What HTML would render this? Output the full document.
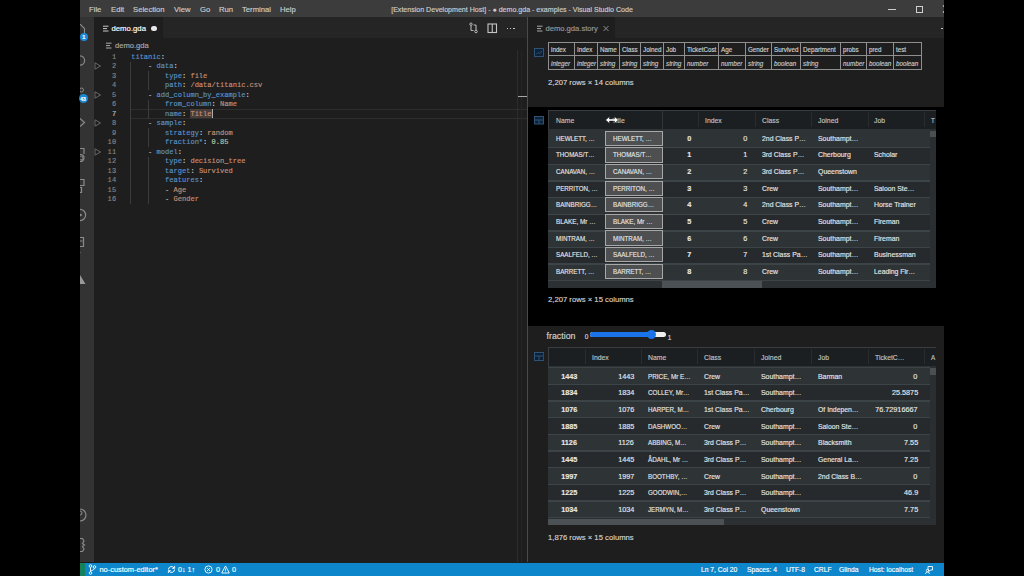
<!DOCTYPE html><html><head><meta charset="utf-8"><style>
html,body{margin:0;padding:0;width:1024px;height:576px;overflow:hidden;background:#000;}
body{position:relative;font-family:"Liberation Sans",sans-serif;}
.t{position:absolute;white-space:nowrap;line-height:0;-webkit-text-stroke:0.15px currentColor;}
.b{position:absolute;box-sizing:border-box;}
svg{position:absolute;overflow:hidden;}
</style></head><body>
<div class="b" style="left:80px;top:0px;width:864px;height:576px;background:#1e1e1e;"></div>
<div class="b" style="left:80px;top:0px;width:864px;height:17.2px;background:#3c3c3c;"></div>
<div class="t" style="left:89px;top:9.6px;font-size:7.7px;color:#cccccc;font-weight:normal;font-style:normal;font-family:'Liberation Sans', sans-serif;">File</div>
<div class="t" style="left:111px;top:9.6px;font-size:7.7px;color:#cccccc;font-weight:normal;font-style:normal;font-family:'Liberation Sans', sans-serif;">Edit</div>
<div class="t" style="left:133px;top:9.6px;font-size:7.7px;color:#cccccc;font-weight:normal;font-style:normal;font-family:'Liberation Sans', sans-serif;">Selection</div>
<div class="t" style="left:174px;top:9.6px;font-size:7.7px;color:#cccccc;font-weight:normal;font-style:normal;font-family:'Liberation Sans', sans-serif;">View</div>
<div class="t" style="left:200px;top:9.6px;font-size:7.7px;color:#cccccc;font-weight:normal;font-style:normal;font-family:'Liberation Sans', sans-serif;">Go</div>
<div class="t" style="left:219px;top:9.6px;font-size:7.7px;color:#cccccc;font-weight:normal;font-style:normal;font-family:'Liberation Sans', sans-serif;">Run</div>
<div class="t" style="left:242px;top:9.6px;font-size:7.7px;color:#cccccc;font-weight:normal;font-style:normal;font-family:'Liberation Sans', sans-serif;">Terminal</div>
<div class="t" style="left:280px;top:9.6px;font-size:7.7px;color:#cccccc;font-weight:normal;font-style:normal;font-family:'Liberation Sans', sans-serif;">Help</div>
<div class="t" style="left:512px;top:9.6px;font-size:7.07px;color:#cccccc;font-weight:normal;font-style:normal;font-family:'Liberation Sans', sans-serif;transform:translateX(-50%) scaleX(1.0);">[Extension Development Host] - ● demo.gda - examples - Visual Studio Code</div>
<div class="b" style="left:888px;top:9px;width:8px;height:1px;background:#cccccc;"></div>
<div class="b" style="left:916px;top:6px;width:6.6px;height:6.5px;background:transparent;border:1.2px solid #d0d0d0;"></div>
<svg style="left:940px;top:4px" width="4" height="10" viewBox="0 0 4 10"><path d="M3 1.5L6 4.5M3 8.5L6 5.5" stroke="#ccc" stroke-width="1.1"/></svg>
<div class="b" style="left:80px;top:17.2px;width:13.5px;height:545.3px;background:#333333;"></div>
<svg style="left:80px;top:22px" width="8" height="12" viewBox="0 0 8 12"><path d="M-3 2.5h3.5l4 4v6" stroke="#8a8a8a" fill="none" stroke-width="1.1"/></svg>
<svg style="left:80px;top:54px" width="8" height="14" viewBox="0 0 8 14"><circle cx="0" cy="6.5" r="4.6" stroke="#8a8a8a" fill="none" stroke-width="1.2"/></svg>
<svg style="left:80px;top:86px" width="8" height="8" viewBox="0 0 8 8"><circle cx="1.5" cy="4" r="2" stroke="#8a8a8a" fill="none" stroke-width="1"/></svg>
<svg style="left:80px;top:117px" width="8" height="12" viewBox="0 0 8 12"><path d="M0 1.5L4.5 5.5L0 9.5" stroke="#8a8a8a" fill="none" stroke-width="1.2"/></svg>
<svg style="left:80px;top:147px" width="8" height="16" viewBox="0 0 8 16"><path d="M-2 1.5h6v5.5M-2 7.5h2.5a3 3 0 0 1 0 7H-2" stroke="#8a8a8a" fill="none" stroke-width="1.2"/><circle cx="1" cy="11" r="2" stroke="#8a8a8a" fill="none" stroke-width="1"/></svg>
<svg style="left:80px;top:178px" width="8" height="16" viewBox="0 0 8 16"><path d="M-2 1.5h6v6h-6M-2 9.5h3.5v5h-3.5" stroke="#8a8a8a" fill="none" stroke-width="1.2"/></svg>
<svg style="left:80px;top:207px" width="8" height="17" viewBox="0 0 8 17"><circle cx="0" cy="8" r="5.6" stroke="#8a8a8a" fill="none" stroke-width="1.2"/><circle cx="0.5" cy="8" r="1.3" fill="#8a8a8a"/></svg>
<svg style="left:80px;top:236px" width="8" height="19" viewBox="0 0 8 19"><path d="M-3 1.5h6.5v9h-6.5M0 5h2.5M-3 10.5v6h3.5" stroke="#8a8a8a" fill="none" stroke-width="1.2"/></svg>
<svg style="left:80px;top:274px" width="8" height="11" viewBox="0 0 8 11"><path d="M0 1L5.5 10H0Z" fill="#999"/></svg>
<svg style="left:80px;top:507px" width="8" height="17" viewBox="0 0 8 17"><circle cx="0" cy="8" r="6" stroke="#8a8a8a" fill="none" stroke-width="1.2"/><circle cx="0" cy="6" r="2" stroke="#8a8a8a" fill="none" stroke-width="1"/></svg>
<svg style="left:80px;top:537px" width="8" height="16" viewBox="0 0 8 16"><path d="M0 1.5h2.5l1.5 2.5-1.5 2.5 2 1.5-2 1.5 1.5 2.5-1.5 2.5H0" stroke="#8a8a8a" fill="none" stroke-width="1.2"/></svg>
<div class="b" style="left:79.5px;top:32.6px;width:8.4px;height:8.4px;border-radius:50%;background:#1a8ad8"></div>
<div class="t" style="left:83.7px;top:37.2px;font-size:5.5px;color:#fff;font-weight:bold;font-style:normal;font-family:'Liberation Sans', sans-serif;transform:translateX(-50%) scaleX(1.0);">1</div>
<div class="b" style="left:78.5px;top:94.4px;width:9px;height:9px;border-radius:50%;background:#1a8ad8"></div>
<div class="t" style="left:83px;top:99px;font-size:5px;color:#fff;font-weight:bold;font-style:normal;font-family:'Liberation Sans', sans-serif;transform:translateX(-50%) scaleX(1.0);">43</div>
<div class="b" style="left:93.5px;top:17.2px;width:433.5px;height:21.2px;background:#252526;"></div>
<div class="b" style="left:93.5px;top:17.2px;width:69.5px;height:21.2px;background:#1e1e1e;"></div>
<svg style="left:102.5px;top:24.5px" width="6" height="8" viewBox="0 0 6 8"><path d="M0 1.2h5.5M0 3.6h4M0 6h5.5" stroke="#c8c8c8" stroke-width="1"/></svg>
<div class="t" style="left:111.5px;top:28.7px;font-size:7.75px;color:#ffffff;font-weight:normal;font-style:normal;font-family:'Liberation Sans', sans-serif;">demo.gda</div>
<div class="b" style="left:151.4px;top:26px;width:5.2px;height:5.2px;border-radius:50%;background:#e8e8e8"></div>
<svg style="left:468px;top:22px" width="11" height="12" viewBox="0 0 11 12"><path d="M3 3.5v5M8 3v5" stroke="#c5c5c5" fill="none" stroke-width="1"/><circle cx="3" cy="2.2" r="1.2" stroke="#c5c5c5" fill="none" stroke-width="0.9"/><circle cx="8" cy="9.5" r="1.3" stroke="#c5c5c5" fill="none" stroke-width="0.9"/><path d="M3 8.5h2.5M8 3h-2.5" stroke="#c5c5c5" stroke-width="0.9"/></svg>
<svg style="left:487px;top:22.5px" width="11" height="11" viewBox="0 0 11 11"><rect x="1" y="1" width="8.5" height="8.5" stroke="#c5c5c5" fill="none" stroke-width="1.1"/><path d="M5.25 1v8.5" stroke="#c5c5c5" stroke-width="1.1"/></svg>
<div class="b" style="left:506.6px;top:27.6px;width:1.5px;height:1.5px;background:#c5c5c5;"></div>
<div class="b" style="left:509.90000000000003px;top:27.6px;width:1.5px;height:1.5px;background:#c5c5c5;"></div>
<div class="b" style="left:513.2px;top:27.6px;width:1.5px;height:1.5px;background:#c5c5c5;"></div>
<svg style="left:106px;top:41.6px" width="6" height="8" viewBox="0 0 6 8"><path d="M0 1.2h5.5M0 3.6h4M0 6h5.5" stroke="#aaaaaa" stroke-width="1"/></svg>
<div class="t" style="left:115px;top:45.6px;font-size:7.6px;color:#a9a9a9;font-weight:normal;font-style:normal;font-family:'Liberation Sans', sans-serif;">demo.gda</div>
<div class="b" style="left:130px;top:109.08px;width:396.5px;height:9.6px;background:transparent;border-top:1px solid #2e2e2e;border-bottom:1px solid #2e2e2e;"></div>
<div class="b" style="left:130.2px;top:61.74px;width:1px;height:142.20000000000002px;background:#3c3c3c;"></div>
<div class="b" style="left:147.9px;top:71.22px;width:1px;height:18.96px;background:#3c3c3c;"></div>
<div class="b" style="left:147.9px;top:99.66px;width:1px;height:18.96px;background:#3c3c3c;"></div>
<div class="b" style="left:147.9px;top:128.1px;width:1px;height:18.96px;background:#3c3c3c;"></div>
<div class="b" style="left:147.9px;top:156.54000000000002px;width:1px;height:47.400000000000006px;background:#3c3c3c;"></div>
<div class="b" style="left:190.42px;top:109.38px;width:21.150000000000002px;height:9px;background:#4a3e3a;"></div>
<div class="b" style="left:211.57px;top:109.28px;width:1px;height:9.2px;background:#aeafad;"></div>
<div class="t" style="right:907.8px;top:57.0px;font-size:7.02px;color:#858585;font-weight:normal;font-style:normal;font-family:'Liberation Mono', monospace;letter-spacing:0.1px;">1</div>
<div class="t" style="left:131.2px;top:57.0px;font-size:7.05px;color:#5b92c6;font-weight:normal;font-style:normal;font-family:'Liberation Mono', monospace;letter-spacing:0.0px;">titanic</div>
<div class="t" style="left:160.81px;top:57.0px;font-size:7.05px;color:#d4d4d4;font-weight:normal;font-style:normal;font-family:'Liberation Mono', monospace;letter-spacing:0.0px;">:</div>
<div class="t" style="right:907.8px;top:66.48px;font-size:7.02px;color:#858585;font-weight:normal;font-style:normal;font-family:'Liberation Mono', monospace;letter-spacing:0.1px;">2</div>
<div class="t" style="left:148.12px;top:66.48px;font-size:7.05px;color:#d4d4d4;font-weight:normal;font-style:normal;font-family:'Liberation Mono', monospace;letter-spacing:0.0px;">-</div>
<div class="t" style="left:156.57999999999998px;top:66.48px;font-size:7.05px;color:#5b92c6;font-weight:normal;font-style:normal;font-family:'Liberation Mono', monospace;letter-spacing:0.0px;">data</div>
<div class="t" style="left:173.5px;top:66.48px;font-size:7.05px;color:#d4d4d4;font-weight:normal;font-style:normal;font-family:'Liberation Mono', monospace;letter-spacing:0.0px;">:</div>
<div class="t" style="right:907.8px;top:75.96000000000001px;font-size:7.02px;color:#858585;font-weight:normal;font-style:normal;font-family:'Liberation Mono', monospace;letter-spacing:0.1px;">3</div>
<div class="t" style="left:165.04px;top:75.96000000000001px;font-size:7.05px;color:#5b92c6;font-weight:normal;font-style:normal;font-family:'Liberation Mono', monospace;letter-spacing:0.0px;">type</div>
<div class="t" style="left:181.95999999999998px;top:75.96000000000001px;font-size:7.05px;color:#d4d4d4;font-weight:normal;font-style:normal;font-family:'Liberation Mono', monospace;letter-spacing:0.0px;">:</div>
<div class="t" style="left:190.42px;top:75.96000000000001px;font-size:7.05px;color:#c88f76;font-weight:normal;font-style:normal;font-family:'Liberation Mono', monospace;letter-spacing:0.0px;">file</div>
<div class="t" style="right:907.8px;top:85.44px;font-size:7.02px;color:#858585;font-weight:normal;font-style:normal;font-family:'Liberation Mono', monospace;letter-spacing:0.1px;">4</div>
<div class="t" style="left:165.04px;top:85.44px;font-size:7.05px;color:#5b92c6;font-weight:normal;font-style:normal;font-family:'Liberation Mono', monospace;letter-spacing:0.0px;">path</div>
<div class="t" style="left:181.95999999999998px;top:85.44px;font-size:7.05px;color:#d4d4d4;font-weight:normal;font-style:normal;font-family:'Liberation Mono', monospace;letter-spacing:0.0px;">:</div>
<div class="t" style="left:190.42px;top:85.44px;font-size:7.05px;color:#c88f76;font-weight:normal;font-style:normal;font-family:'Liberation Mono', monospace;letter-spacing:0.0px;">/data/titanic.csv</div>
<div class="t" style="right:907.8px;top:94.92px;font-size:7.02px;color:#858585;font-weight:normal;font-style:normal;font-family:'Liberation Mono', monospace;letter-spacing:0.1px;">5</div>
<div class="t" style="left:148.12px;top:94.92px;font-size:7.05px;color:#d4d4d4;font-weight:normal;font-style:normal;font-family:'Liberation Mono', monospace;letter-spacing:0.0px;">-</div>
<div class="t" style="left:156.57999999999998px;top:94.92px;font-size:7.05px;color:#5b92c6;font-weight:normal;font-style:normal;font-family:'Liberation Mono', monospace;letter-spacing:0.0px;">add_column_by_example</div>
<div class="t" style="left:245.41px;top:94.92px;font-size:7.05px;color:#d4d4d4;font-weight:normal;font-style:normal;font-family:'Liberation Mono', monospace;letter-spacing:0.0px;">:</div>
<div class="t" style="right:907.8px;top:104.4px;font-size:7.02px;color:#858585;font-weight:normal;font-style:normal;font-family:'Liberation Mono', monospace;letter-spacing:0.1px;">6</div>
<div class="t" style="left:165.04px;top:104.4px;font-size:7.05px;color:#5b92c6;font-weight:normal;font-style:normal;font-family:'Liberation Mono', monospace;letter-spacing:0.0px;">from_column</div>
<div class="t" style="left:211.57px;top:104.4px;font-size:7.05px;color:#d4d4d4;font-weight:normal;font-style:normal;font-family:'Liberation Mono', monospace;letter-spacing:0.0px;">:</div>
<div class="t" style="left:220.03px;top:104.4px;font-size:7.05px;color:#c88f76;font-weight:normal;font-style:normal;font-family:'Liberation Mono', monospace;letter-spacing:0.0px;">Name</div>
<div class="t" style="right:907.8px;top:113.88px;font-size:7.02px;color:#c6c6c6;font-weight:normal;font-style:normal;font-family:'Liberation Mono', monospace;letter-spacing:0.1px;">7</div>
<div class="t" style="left:165.04px;top:113.88px;font-size:7.05px;color:#5b92c6;font-weight:normal;font-style:normal;font-family:'Liberation Mono', monospace;letter-spacing:0.0px;">name</div>
<div class="t" style="left:181.95999999999998px;top:113.88px;font-size:7.05px;color:#d4d4d4;font-weight:normal;font-style:normal;font-family:'Liberation Mono', monospace;letter-spacing:0.0px;">:</div>
<div class="t" style="left:190.42px;top:113.88px;font-size:7.05px;color:#c88f76;font-weight:normal;font-style:normal;font-family:'Liberation Mono', monospace;letter-spacing:0.0px;">Title</div>
<div class="t" style="right:907.8px;top:123.36px;font-size:7.02px;color:#858585;font-weight:normal;font-style:normal;font-family:'Liberation Mono', monospace;letter-spacing:0.1px;">8</div>
<div class="t" style="left:148.12px;top:123.36px;font-size:7.05px;color:#d4d4d4;font-weight:normal;font-style:normal;font-family:'Liberation Mono', monospace;letter-spacing:0.0px;">-</div>
<div class="t" style="left:156.57999999999998px;top:123.36px;font-size:7.05px;color:#5b92c6;font-weight:normal;font-style:normal;font-family:'Liberation Mono', monospace;letter-spacing:0.0px;">sample</div>
<div class="t" style="left:181.95999999999998px;top:123.36px;font-size:7.05px;color:#d4d4d4;font-weight:normal;font-style:normal;font-family:'Liberation Mono', monospace;letter-spacing:0.0px;">:</div>
<div class="t" style="right:907.8px;top:132.84px;font-size:7.02px;color:#858585;font-weight:normal;font-style:normal;font-family:'Liberation Mono', monospace;letter-spacing:0.1px;">9</div>
<div class="t" style="left:165.04px;top:132.84px;font-size:7.05px;color:#5b92c6;font-weight:normal;font-style:normal;font-family:'Liberation Mono', monospace;letter-spacing:0.0px;">strategy</div>
<div class="t" style="left:198.88px;top:132.84px;font-size:7.05px;color:#d4d4d4;font-weight:normal;font-style:normal;font-family:'Liberation Mono', monospace;letter-spacing:0.0px;">:</div>
<div class="t" style="left:207.34px;top:132.84px;font-size:7.05px;color:#c88f76;font-weight:normal;font-style:normal;font-family:'Liberation Mono', monospace;letter-spacing:0.0px;">random</div>
<div class="t" style="right:907.8px;top:142.32px;font-size:7.02px;color:#858585;font-weight:normal;font-style:normal;font-family:'Liberation Mono', monospace;letter-spacing:0.1px;">10</div>
<div class="t" style="left:165.04px;top:142.32px;font-size:7.05px;color:#5b92c6;font-weight:normal;font-style:normal;font-family:'Liberation Mono', monospace;letter-spacing:0.0px;">fraction*</div>
<div class="t" style="left:203.11px;top:142.32px;font-size:7.05px;color:#d4d4d4;font-weight:normal;font-style:normal;font-family:'Liberation Mono', monospace;letter-spacing:0.0px;">:</div>
<div class="t" style="left:211.57px;top:142.32px;font-size:7.05px;color:#b5cea8;font-weight:normal;font-style:normal;font-family:'Liberation Mono', monospace;letter-spacing:0.0px;">0.85</div>
<div class="t" style="right:907.8px;top:151.8px;font-size:7.02px;color:#858585;font-weight:normal;font-style:normal;font-family:'Liberation Mono', monospace;letter-spacing:0.1px;">11</div>
<div class="t" style="left:148.12px;top:151.8px;font-size:7.05px;color:#d4d4d4;font-weight:normal;font-style:normal;font-family:'Liberation Mono', monospace;letter-spacing:0.0px;">-</div>
<div class="t" style="left:156.57999999999998px;top:151.8px;font-size:7.05px;color:#5b92c6;font-weight:normal;font-style:normal;font-family:'Liberation Mono', monospace;letter-spacing:0.0px;">model</div>
<div class="t" style="left:177.73px;top:151.8px;font-size:7.05px;color:#d4d4d4;font-weight:normal;font-style:normal;font-family:'Liberation Mono', monospace;letter-spacing:0.0px;">:</div>
<div class="t" style="right:907.8px;top:161.28px;font-size:7.02px;color:#858585;font-weight:normal;font-style:normal;font-family:'Liberation Mono', monospace;letter-spacing:0.1px;">12</div>
<div class="t" style="left:165.04px;top:161.28px;font-size:7.05px;color:#5b92c6;font-weight:normal;font-style:normal;font-family:'Liberation Mono', monospace;letter-spacing:0.0px;">type</div>
<div class="t" style="left:181.95999999999998px;top:161.28px;font-size:7.05px;color:#d4d4d4;font-weight:normal;font-style:normal;font-family:'Liberation Mono', monospace;letter-spacing:0.0px;">:</div>
<div class="t" style="left:190.42px;top:161.28px;font-size:7.05px;color:#c88f76;font-weight:normal;font-style:normal;font-family:'Liberation Mono', monospace;letter-spacing:0.0px;">decision_tree</div>
<div class="t" style="right:907.8px;top:170.76px;font-size:7.02px;color:#858585;font-weight:normal;font-style:normal;font-family:'Liberation Mono', monospace;letter-spacing:0.1px;">13</div>
<div class="t" style="left:165.04px;top:170.76px;font-size:7.05px;color:#5b92c6;font-weight:normal;font-style:normal;font-family:'Liberation Mono', monospace;letter-spacing:0.0px;">target</div>
<div class="t" style="left:190.42px;top:170.76px;font-size:7.05px;color:#d4d4d4;font-weight:normal;font-style:normal;font-family:'Liberation Mono', monospace;letter-spacing:0.0px;">:</div>
<div class="t" style="left:198.88px;top:170.76px;font-size:7.05px;color:#c88f76;font-weight:normal;font-style:normal;font-family:'Liberation Mono', monospace;letter-spacing:0.0px;">Survived</div>
<div class="t" style="right:907.8px;top:180.24px;font-size:7.02px;color:#858585;font-weight:normal;font-style:normal;font-family:'Liberation Mono', monospace;letter-spacing:0.1px;">14</div>
<div class="t" style="left:165.04px;top:180.24px;font-size:7.05px;color:#5b92c6;font-weight:normal;font-style:normal;font-family:'Liberation Mono', monospace;letter-spacing:0.0px;">features</div>
<div class="t" style="left:198.88px;top:180.24px;font-size:7.05px;color:#d4d4d4;font-weight:normal;font-style:normal;font-family:'Liberation Mono', monospace;letter-spacing:0.0px;">:</div>
<div class="t" style="right:907.8px;top:189.72px;font-size:7.02px;color:#858585;font-weight:normal;font-style:normal;font-family:'Liberation Mono', monospace;letter-spacing:0.1px;">15</div>
<div class="t" style="left:165.04px;top:189.72px;font-size:7.05px;color:#d4d4d4;font-weight:normal;font-style:normal;font-family:'Liberation Mono', monospace;letter-spacing:0.0px;">-</div>
<div class="t" style="left:173.5px;top:189.72px;font-size:7.05px;color:#c88f76;font-weight:normal;font-style:normal;font-family:'Liberation Mono', monospace;letter-spacing:0.0px;">Age</div>
<div class="t" style="right:907.8px;top:199.20000000000002px;font-size:7.02px;color:#858585;font-weight:normal;font-style:normal;font-family:'Liberation Mono', monospace;letter-spacing:0.1px;">16</div>
<div class="t" style="left:165.04px;top:199.20000000000002px;font-size:7.05px;color:#d4d4d4;font-weight:normal;font-style:normal;font-family:'Liberation Mono', monospace;letter-spacing:0.0px;">-</div>
<div class="t" style="left:173.5px;top:199.20000000000002px;font-size:7.05px;color:#c88f76;font-weight:normal;font-style:normal;font-family:'Liberation Mono', monospace;letter-spacing:0.0px;">Gender</div>
<svg style="left:94px;top:62.480000000000004px" width="8" height="8" viewBox="0 0 8 8"><path d="M1 0.8L6.5 4L1 7.2Z" stroke="#707070" fill="none" stroke-width="0.9"/></svg>
<svg style="left:94px;top:90.92px" width="8" height="8" viewBox="0 0 8 8"><path d="M1 0.8L6.5 4L1 7.2Z" stroke="#707070" fill="none" stroke-width="0.9"/></svg>
<svg style="left:94px;top:119.36px" width="8" height="8" viewBox="0 0 8 8"><path d="M1 0.8L6.5 4L1 7.2Z" stroke="#707070" fill="none" stroke-width="0.9"/></svg>
<svg style="left:94px;top:147.8px" width="8" height="8" viewBox="0 0 8 8"><path d="M1 0.8L6.5 4L1 7.2Z" stroke="#707070" fill="none" stroke-width="0.9"/></svg>
<div class="b" style="left:516.6px;top:50px;width:1px;height:512px;background:#2c2c2c;"></div>
<div class="b" style="left:521px;top:50px;width:1px;height:512px;background:#252525;"></div>
<div class="b" style="left:518px;top:95.6px;width:8.5px;height:1.2px;background:#a8a8a8;"></div>
<div class="b" style="left:526.5px;top:17.2px;width:1px;height:545.3px;background:#4a4a4a;"></div>
<div class="b" style="left:528px;top:17.2px;width:416px;height:21.2px;background:#252526;"></div>
<div class="b" style="left:528px;top:17.2px;width:87px;height:21.2px;background:#1e1e1e;"></div>
<svg style="left:536.5px;top:24.5px" width="6" height="8" viewBox="0 0 6 8"><path d="M0 1.2h5.5M0 3.6h4M0 6h5.5" stroke="#aaaaaa" stroke-width="1"/></svg>
<div class="t" style="left:545.5px;top:29px;font-size:7.6px;color:#9a9a9a;font-weight:normal;font-style:normal;font-family:'Liberation Sans', sans-serif;">demo.gda.story</div>
<svg style="left:603px;top:25px" width="6" height="7" viewBox="0 0 6 7"><path d="M0.5 1L5.5 6M5.5 1L0.5 6" stroke="#9a9a9a" stroke-width="0.9"/></svg>
<div class="b" style="left:941px;top:27.6px;width:1.5px;height:1.5px;background:#c5c5c5;"></div>
<svg style="left:534px;top:47.5px" width="10" height="9" viewBox="0 0 10 9"><rect x="0.5" y="0.5" width="9" height="8" fill="#0c2238" stroke="#2f5275"/><path d="M2 6.5l2-2 2 1 2-3" stroke="#2f5275" fill="none" stroke-width="0.9"/></svg>
<div class="b" style="left:548px;top:42px;width:374px;height:27.5px;background:#1e1e1e;border:1px solid #8f8f8f;"></div>
<div class="b" style="left:548px;top:55.0px;width:373px;height:1px;background:#8f8f8f;"></div>
<div class="t" style="left:550.5px;top:50px;font-size:6.6px;color:#d0d0d0;font-weight:normal;font-style:normal;font-family:'Liberation Sans', sans-serif;transform:scaleX(0.95);transform-origin:left center;">index</div>
<div class="t" style="left:550.5px;top:63.6px;font-size:6.6px;color:#c8c8c8;font-weight:normal;font-style:italic;font-family:'Liberation Sans', sans-serif;transform:scaleX(0.95);transform-origin:left center;">integer</div>
<div class="b" style="left:573.6px;top:42px;width:1px;height:27.5px;background:#8f8f8f;"></div>
<div class="t" style="left:576.5px;top:50px;font-size:6.6px;color:#d0d0d0;font-weight:normal;font-style:normal;font-family:'Liberation Sans', sans-serif;transform:scaleX(0.95);transform-origin:left center;">Index</div>
<div class="t" style="left:576.5px;top:63.6px;font-size:6.6px;color:#c8c8c8;font-weight:normal;font-style:italic;font-family:'Liberation Sans', sans-serif;transform:scaleX(0.95);transform-origin:left center;">integer</div>
<div class="b" style="left:597.1px;top:42px;width:1px;height:27.5px;background:#8f8f8f;"></div>
<div class="t" style="left:600.0px;top:50px;font-size:6.6px;color:#d0d0d0;font-weight:normal;font-style:normal;font-family:'Liberation Sans', sans-serif;transform:scaleX(0.95);transform-origin:left center;">Name</div>
<div class="t" style="left:600.0px;top:63.6px;font-size:6.6px;color:#c8c8c8;font-weight:normal;font-style:italic;font-family:'Liberation Sans', sans-serif;transform:scaleX(0.95);transform-origin:left center;">string</div>
<div class="b" style="left:619.1px;top:42px;width:1px;height:27.5px;background:#8f8f8f;"></div>
<div class="t" style="left:622.0px;top:50px;font-size:6.6px;color:#d0d0d0;font-weight:normal;font-style:normal;font-family:'Liberation Sans', sans-serif;transform:scaleX(0.95);transform-origin:left center;">Class</div>
<div class="t" style="left:622.0px;top:63.6px;font-size:6.6px;color:#c8c8c8;font-weight:normal;font-style:italic;font-family:'Liberation Sans', sans-serif;transform:scaleX(0.95);transform-origin:left center;">string</div>
<div class="b" style="left:639.6px;top:42px;width:1px;height:27.5px;background:#8f8f8f;"></div>
<div class="t" style="left:642.5px;top:50px;font-size:6.6px;color:#d0d0d0;font-weight:normal;font-style:normal;font-family:'Liberation Sans', sans-serif;transform:scaleX(0.95);transform-origin:left center;">Joined</div>
<div class="t" style="left:642.5px;top:63.6px;font-size:6.6px;color:#c8c8c8;font-weight:normal;font-style:italic;font-family:'Liberation Sans', sans-serif;transform:scaleX(0.95);transform-origin:left center;">string</div>
<div class="b" style="left:663.1px;top:42px;width:1px;height:27.5px;background:#8f8f8f;"></div>
<div class="t" style="left:666.0px;top:50px;font-size:6.6px;color:#d0d0d0;font-weight:normal;font-style:normal;font-family:'Liberation Sans', sans-serif;transform:scaleX(0.95);transform-origin:left center;">Job</div>
<div class="t" style="left:666.0px;top:63.6px;font-size:6.6px;color:#c8c8c8;font-weight:normal;font-style:italic;font-family:'Liberation Sans', sans-serif;transform:scaleX(0.95);transform-origin:left center;">string</div>
<div class="b" style="left:684.1px;top:42px;width:1px;height:27.5px;background:#8f8f8f;"></div>
<div class="t" style="left:687.0px;top:50px;font-size:6.6px;color:#d0d0d0;font-weight:normal;font-style:normal;font-family:'Liberation Sans', sans-serif;transform:scaleX(0.95);transform-origin:left center;">TicketCost</div>
<div class="t" style="left:687.0px;top:63.6px;font-size:6.6px;color:#c8c8c8;font-weight:normal;font-style:italic;font-family:'Liberation Sans', sans-serif;transform:scaleX(0.95);transform-origin:left center;">number</div>
<div class="b" style="left:717.6px;top:42px;width:1px;height:27.5px;background:#8f8f8f;"></div>
<div class="t" style="left:720.5px;top:50px;font-size:6.6px;color:#d0d0d0;font-weight:normal;font-style:normal;font-family:'Liberation Sans', sans-serif;transform:scaleX(0.95);transform-origin:left center;">Age</div>
<div class="t" style="left:720.5px;top:63.6px;font-size:6.6px;color:#c8c8c8;font-weight:normal;font-style:italic;font-family:'Liberation Sans', sans-serif;transform:scaleX(0.95);transform-origin:left center;">number</div>
<div class="b" style="left:744.6px;top:42px;width:1px;height:27.5px;background:#8f8f8f;"></div>
<div class="t" style="left:747.5px;top:50px;font-size:6.6px;color:#d0d0d0;font-weight:normal;font-style:normal;font-family:'Liberation Sans', sans-serif;transform:scaleX(0.95);transform-origin:left center;">Gender</div>
<div class="t" style="left:747.5px;top:63.6px;font-size:6.6px;color:#c8c8c8;font-weight:normal;font-style:italic;font-family:'Liberation Sans', sans-serif;transform:scaleX(0.95);transform-origin:left center;">string</div>
<div class="b" style="left:770.6px;top:42px;width:1px;height:27.5px;background:#8f8f8f;"></div>
<div class="t" style="left:773.5px;top:50px;font-size:6.6px;color:#d0d0d0;font-weight:normal;font-style:normal;font-family:'Liberation Sans', sans-serif;transform:scaleX(0.95);transform-origin:left center;">Survived</div>
<div class="t" style="left:773.5px;top:63.6px;font-size:6.6px;color:#c8c8c8;font-weight:normal;font-style:italic;font-family:'Liberation Sans', sans-serif;transform:scaleX(0.95);transform-origin:left center;">boolean</div>
<div class="b" style="left:800.1px;top:42px;width:1px;height:27.5px;background:#8f8f8f;"></div>
<div class="t" style="left:803.0px;top:50px;font-size:6.6px;color:#d0d0d0;font-weight:normal;font-style:normal;font-family:'Liberation Sans', sans-serif;transform:scaleX(0.95);transform-origin:left center;">Department</div>
<div class="t" style="left:803.0px;top:63.6px;font-size:6.6px;color:#c8c8c8;font-weight:normal;font-style:italic;font-family:'Liberation Sans', sans-serif;transform:scaleX(0.95);transform-origin:left center;">string</div>
<div class="b" style="left:839.6px;top:42px;width:1px;height:27.5px;background:#8f8f8f;"></div>
<div class="t" style="left:842.5px;top:50px;font-size:6.6px;color:#d0d0d0;font-weight:normal;font-style:normal;font-family:'Liberation Sans', sans-serif;transform:scaleX(0.95);transform-origin:left center;">probs</div>
<div class="t" style="left:842.5px;top:63.6px;font-size:6.6px;color:#c8c8c8;font-weight:normal;font-style:italic;font-family:'Liberation Sans', sans-serif;transform:scaleX(0.95);transform-origin:left center;">number</div>
<div class="b" style="left:865.6px;top:42px;width:1px;height:27.5px;background:#8f8f8f;"></div>
<div class="t" style="left:868.5px;top:50px;font-size:6.6px;color:#d0d0d0;font-weight:normal;font-style:normal;font-family:'Liberation Sans', sans-serif;transform:scaleX(0.95);transform-origin:left center;">pred</div>
<div class="t" style="left:868.5px;top:63.6px;font-size:6.6px;color:#c8c8c8;font-weight:normal;font-style:italic;font-family:'Liberation Sans', sans-serif;transform:scaleX(0.95);transform-origin:left center;">boolean</div>
<div class="b" style="left:893.1px;top:42px;width:1px;height:27.5px;background:#8f8f8f;"></div>
<div class="t" style="left:896.0px;top:50px;font-size:6.6px;color:#d0d0d0;font-weight:normal;font-style:normal;font-family:'Liberation Sans', sans-serif;transform:scaleX(0.95);transform-origin:left center;">test</div>
<div class="t" style="left:896.0px;top:63.6px;font-size:6.6px;color:#c8c8c8;font-weight:normal;font-style:italic;font-family:'Liberation Sans', sans-serif;transform:scaleX(0.95);transform-origin:left center;">boolean</div>
<div class="t" style="left:548px;top:82.7px;font-size:7.7px;color:#d4d4d4;font-weight:normal;font-style:normal;font-family:'Liberation Sans', sans-serif;">2,207 rows × 14 columns</div>
<div class="b" style="left:528px;top:107.2px;width:416px;height:218.4px;background:#000000;"></div>
<svg style="left:534px;top:116px" width="10" height="8.5" viewBox="0 0 10 8.5"><rect x="0.5" y="0.5" width="9" height="7.5" fill="#0c2238" stroke="#2f5275"/><path d="M0.5 4h9M5 4v4" stroke="#2f5275"/></svg>
<div class="b" style="left:548px;top:110px;width:388.20000000000005px;height:178px;background:#2b2f31;"></div>
<div class="b" style="left:548px;top:110px;width:388.20000000000005px;height:19px;background:#1c1f21;border-top:1px solid #3a3e41;border-left:1px solid #3a3e41;"></div>
<div class="b" style="left:548px;top:129px;width:381.9000000000001px;height:1.5px;background:#2e3336;"></div>
<div class="b" style="left:661.5px;top:110px;width:1.3px;height:19px;background:#33373a;"></div>
<div class="b" style="left:698px;top:112px;width:1px;height:15px;background:#2a2d30;"></div>
<div class="b" style="left:755px;top:112px;width:1px;height:15px;background:#2a2d30;"></div>
<div class="b" style="left:811px;top:112px;width:1px;height:15px;background:#2a2d30;"></div>
<div class="b" style="left:867.5px;top:112px;width:1px;height:15px;background:#2a2d30;"></div>
<div class="b" style="left:924px;top:112px;width:1px;height:15px;background:#2a2d30;"></div>
<div class="b" style="left:548px;top:130.5px;width:381.9000000000001px;height:16.64px;background:#2e3336;"></div>
<div class="b" style="left:548px;top:147.14px;width:381.9000000000001px;height:16.64px;background:#262a2d;"></div>
<div class="b" style="left:548px;top:146.94px;width:381.9000000000001px;height:1.4px;background:#3d4447;"></div>
<div class="b" style="left:548px;top:163.78px;width:381.9000000000001px;height:16.64px;background:#2e3336;"></div>
<div class="b" style="left:548px;top:163.58px;width:381.9000000000001px;height:1.4px;background:#3d4447;"></div>
<div class="b" style="left:548px;top:180.42000000000002px;width:381.9000000000001px;height:16.64px;background:#262a2d;"></div>
<div class="b" style="left:548px;top:180.22000000000003px;width:381.9000000000001px;height:1.4px;background:#3d4447;"></div>
<div class="b" style="left:548px;top:197.06px;width:381.9000000000001px;height:16.64px;background:#2e3336;"></div>
<div class="b" style="left:548px;top:196.86px;width:381.9000000000001px;height:1.4px;background:#3d4447;"></div>
<div class="b" style="left:548px;top:213.7px;width:381.9000000000001px;height:16.64px;background:#262a2d;"></div>
<div class="b" style="left:548px;top:213.5px;width:381.9000000000001px;height:1.4px;background:#3d4447;"></div>
<div class="b" style="left:548px;top:230.34px;width:381.9000000000001px;height:16.64px;background:#2e3336;"></div>
<div class="b" style="left:548px;top:230.14000000000001px;width:381.9000000000001px;height:1.4px;background:#3d4447;"></div>
<div class="b" style="left:548px;top:246.98000000000002px;width:381.9000000000001px;height:16.64px;background:#262a2d;"></div>
<div class="b" style="left:548px;top:246.78000000000003px;width:381.9000000000001px;height:1.4px;background:#3d4447;"></div>
<div class="b" style="left:548px;top:263.62px;width:381.9000000000001px;height:16.64px;background:#2e3336;"></div>
<div class="b" style="left:548px;top:263.42px;width:381.9000000000001px;height:1.4px;background:#3d4447;"></div>
<div class="b" style="left:548px;top:280.06px;width:381.9000000000001px;height:1.4px;background:#3d4447;"></div>
<div class="b" style="left:929.9000000000001px;top:130.5px;width:6.2999999999999545px;height:150.5px;background:#2a2e30;"></div>
<div class="b" style="left:929.9000000000001px;top:130.5px;width:6.2999999999999545px;height:6px;background:#4a4f52;"></div>
<div class="b" style="left:548px;top:281px;width:388.20000000000005px;height:7px;background:#2c3033;"></div>
<div class="b" style="left:662px;top:281px;width:100px;height:7px;background:#4b5154;"></div>
<div class="t" style="left:555.9000000000001px;top:121.0px;font-size:7.8px;color:#c0c4c6;font-weight:normal;font-style:normal;font-family:'Liberation Sans', sans-serif;transform:scaleX(0.875);transform-origin:left center;">Name</div>
<div class="t" style="left:611.5px;top:121.0px;font-size:7.8px;color:#c0c4c6;font-weight:normal;font-style:normal;font-family:'Liberation Sans', sans-serif;transform:scaleX(0.8800000000000001);transform-origin:left center;">Title</div>
<div class="t" style="left:704.7px;top:121.0px;font-size:7.8px;color:#c0c4c6;font-weight:normal;font-style:normal;font-family:'Liberation Sans', sans-serif;transform:scaleX(0.8800000000000001);transform-origin:left center;">Index</div>
<div class="t" style="left:761.7px;top:121.0px;font-size:7.8px;color:#c0c4c6;font-weight:normal;font-style:normal;font-family:'Liberation Sans', sans-serif;transform:scaleX(0.8800000000000001);transform-origin:left center;">Class</div>
<div class="t" style="left:817.7px;top:121.0px;font-size:7.8px;color:#c0c4c6;font-weight:normal;font-style:normal;font-family:'Liberation Sans', sans-serif;transform:scaleX(0.8833333333333333);transform-origin:left center;">Joined</div>
<div class="t" style="left:874.2px;top:121.0px;font-size:7.8px;color:#c0c4c6;font-weight:normal;font-style:normal;font-family:'Liberation Sans', sans-serif;transform:scaleX(0.8666666666666667);transform-origin:left center;">Job</div>
<div class="t" style="left:930.7px;top:121.0px;font-size:7.8px;color:#c0c4c6;font-weight:normal;font-style:normal;font-family:'Liberation Sans', sans-serif;transform:scaleX(0.8);transform-origin:left center;">T</div>
<div class="t" style="left:555.9000000000001px;top:138.75px;font-size:7.8px;color:#e6e6e6;font-weight:normal;font-style:normal;font-family:'Liberation Sans', sans-serif;transform:scaleX(0.8);transform-origin:left center;">HEWLETT, …</div>
<div class="b" style="left:605.0px;top:130.6px;width:57.80000000000005px;height:15.34px;background:#4d4f50;border:1.2px solid #a8a8a8;"></div>
<div class="t" style="left:612.8px;top:138.75px;font-size:7.8px;color:#e6e6e6;font-weight:normal;font-style:normal;font-family:'Liberation Sans', sans-serif;transform:scaleX(0.8);transform-origin:left center;">HEWLETT, …</div>
<div class="t" style="right:333.0px;top:138.75px;font-size:7.8px;color:#e8e8e8;font-weight:bold;font-style:normal;font-family:'Liberation Sans', sans-serif;transform:scaleX(0.93);transform-origin:right center;">0</div>
<div class="t" style="right:276.79999999999995px;top:138.75px;font-size:7.8px;color:#e8e8e8;font-weight:normal;font-style:normal;font-family:'Liberation Sans', sans-serif;transform:scaleX(0.93);transform-origin:right center;">0</div>
<div class="t" style="left:761.7px;top:138.75px;font-size:7.8px;color:#e6e6e6;font-weight:normal;font-style:normal;font-family:'Liberation Sans', sans-serif;transform:scaleX(0.8811111111111111);transform-origin:left center;">2nd Class P…</div>
<div class="t" style="left:817.7px;top:138.75px;font-size:7.8px;color:#e6e6e6;font-weight:normal;font-style:normal;font-family:'Liberation Sans', sans-serif;transform:scaleX(0.8888888888888888);transform-origin:left center;">Southampt…</div>
<div class="t" style="left:555.9000000000001px;top:155.39px;font-size:7.8px;color:#e6e6e6;font-weight:normal;font-style:normal;font-family:'Liberation Sans', sans-serif;transform:scaleX(0.8);transform-origin:left center;">THOMAS/T…</div>
<div class="b" style="left:605.0px;top:147.23999999999998px;width:57.80000000000005px;height:15.34px;background:#4d4f50;border:1.2px solid #a8a8a8;"></div>
<div class="t" style="left:612.8px;top:155.39px;font-size:7.8px;color:#e6e6e6;font-weight:normal;font-style:normal;font-family:'Liberation Sans', sans-serif;transform:scaleX(0.8);transform-origin:left center;">THOMAS/T…</div>
<div class="t" style="right:333.0px;top:155.39px;font-size:7.8px;color:#e8e8e8;font-weight:bold;font-style:normal;font-family:'Liberation Sans', sans-serif;transform:scaleX(0.93);transform-origin:right center;">1</div>
<div class="t" style="right:276.79999999999995px;top:155.39px;font-size:7.8px;color:#e8e8e8;font-weight:normal;font-style:normal;font-family:'Liberation Sans', sans-serif;transform:scaleX(0.93);transform-origin:right center;">1</div>
<div class="t" style="left:761.7px;top:155.39px;font-size:7.8px;color:#e6e6e6;font-weight:normal;font-style:normal;font-family:'Liberation Sans', sans-serif;transform:scaleX(0.8811111111111111);transform-origin:left center;">3rd Class P…</div>
<div class="t" style="left:817.7px;top:155.39px;font-size:7.8px;color:#e6e6e6;font-weight:normal;font-style:normal;font-family:'Liberation Sans', sans-serif;transform:scaleX(0.8888888888888888);transform-origin:left center;">Cherbourg</div>
<div class="t" style="left:874.2px;top:155.39px;font-size:7.8px;color:#e6e6e6;font-weight:normal;font-style:normal;font-family:'Liberation Sans', sans-serif;transform:scaleX(0.8857142857142858);transform-origin:left center;">Scholar</div>
<div class="t" style="left:555.9000000000001px;top:172.03px;font-size:7.8px;color:#e6e6e6;font-weight:normal;font-style:normal;font-family:'Liberation Sans', sans-serif;transform:scaleX(0.8);transform-origin:left center;">CANAVAN, …</div>
<div class="b" style="left:605.0px;top:163.88px;width:57.80000000000005px;height:15.34px;background:#4d4f50;border:1.2px solid #a8a8a8;"></div>
<div class="t" style="left:612.8px;top:172.03px;font-size:7.8px;color:#e6e6e6;font-weight:normal;font-style:normal;font-family:'Liberation Sans', sans-serif;transform:scaleX(0.8);transform-origin:left center;">CANAVAN, …</div>
<div class="t" style="right:333.0px;top:172.03px;font-size:7.8px;color:#e8e8e8;font-weight:bold;font-style:normal;font-family:'Liberation Sans', sans-serif;transform:scaleX(0.93);transform-origin:right center;">2</div>
<div class="t" style="right:276.79999999999995px;top:172.03px;font-size:7.8px;color:#e8e8e8;font-weight:normal;font-style:normal;font-family:'Liberation Sans', sans-serif;transform:scaleX(0.93);transform-origin:right center;">2</div>
<div class="t" style="left:761.7px;top:172.03px;font-size:7.8px;color:#e6e6e6;font-weight:normal;font-style:normal;font-family:'Liberation Sans', sans-serif;transform:scaleX(0.8811111111111111);transform-origin:left center;">3rd Class P…</div>
<div class="t" style="left:817.7px;top:172.03px;font-size:7.8px;color:#e6e6e6;font-weight:normal;font-style:normal;font-family:'Liberation Sans', sans-serif;transform:scaleX(0.89);transform-origin:left center;">Queenstown</div>
<div class="t" style="left:555.9000000000001px;top:188.67000000000002px;font-size:7.8px;color:#e6e6e6;font-weight:normal;font-style:normal;font-family:'Liberation Sans', sans-serif;transform:scaleX(0.8);transform-origin:left center;">PERRITON, …</div>
<div class="b" style="left:605.0px;top:180.52px;width:57.80000000000005px;height:15.34px;background:#4d4f50;border:1.2px solid #a8a8a8;"></div>
<div class="t" style="left:612.8px;top:188.67000000000002px;font-size:7.8px;color:#e6e6e6;font-weight:normal;font-style:normal;font-family:'Liberation Sans', sans-serif;transform:scaleX(0.8);transform-origin:left center;">PERRITON, …</div>
<div class="t" style="right:333.0px;top:188.67000000000002px;font-size:7.8px;color:#e8e8e8;font-weight:bold;font-style:normal;font-family:'Liberation Sans', sans-serif;transform:scaleX(0.93);transform-origin:right center;">3</div>
<div class="t" style="right:276.79999999999995px;top:188.67000000000002px;font-size:7.8px;color:#e8e8e8;font-weight:normal;font-style:normal;font-family:'Liberation Sans', sans-serif;transform:scaleX(0.93);transform-origin:right center;">3</div>
<div class="t" style="left:761.7px;top:188.67000000000002px;font-size:7.8px;color:#e6e6e6;font-weight:normal;font-style:normal;font-family:'Liberation Sans', sans-serif;transform:scaleX(0.875);transform-origin:left center;">Crew</div>
<div class="t" style="left:817.7px;top:188.67000000000002px;font-size:7.8px;color:#e6e6e6;font-weight:normal;font-style:normal;font-family:'Liberation Sans', sans-serif;transform:scaleX(0.8888888888888888);transform-origin:left center;">Southampt…</div>
<div class="t" style="left:874.2px;top:188.67000000000002px;font-size:7.8px;color:#e6e6e6;font-weight:normal;font-style:normal;font-family:'Liberation Sans', sans-serif;transform:scaleX(0.8777777777777778);transform-origin:left center;">Saloon Ste…</div>
<div class="t" style="left:555.9000000000001px;top:205.31px;font-size:7.8px;color:#e6e6e6;font-weight:normal;font-style:normal;font-family:'Liberation Sans', sans-serif;transform:scaleX(0.8);transform-origin:left center;">BAINBRIGG…</div>
<div class="b" style="left:605.0px;top:197.16px;width:57.80000000000005px;height:15.34px;background:#4d4f50;border:1.2px solid #a8a8a8;"></div>
<div class="t" style="left:612.8px;top:205.31px;font-size:7.8px;color:#e6e6e6;font-weight:normal;font-style:normal;font-family:'Liberation Sans', sans-serif;transform:scaleX(0.8);transform-origin:left center;">BAINBRIGG…</div>
<div class="t" style="right:333.0px;top:205.31px;font-size:7.8px;color:#e8e8e8;font-weight:bold;font-style:normal;font-family:'Liberation Sans', sans-serif;transform:scaleX(0.93);transform-origin:right center;">4</div>
<div class="t" style="right:276.79999999999995px;top:205.31px;font-size:7.8px;color:#e8e8e8;font-weight:normal;font-style:normal;font-family:'Liberation Sans', sans-serif;transform:scaleX(0.93);transform-origin:right center;">4</div>
<div class="t" style="left:761.7px;top:205.31px;font-size:7.8px;color:#e6e6e6;font-weight:normal;font-style:normal;font-family:'Liberation Sans', sans-serif;transform:scaleX(0.8811111111111111);transform-origin:left center;">2nd Class P…</div>
<div class="t" style="left:817.7px;top:205.31px;font-size:7.8px;color:#e6e6e6;font-weight:normal;font-style:normal;font-family:'Liberation Sans', sans-serif;transform:scaleX(0.8888888888888888);transform-origin:left center;">Southampt…</div>
<div class="t" style="left:874.2px;top:205.31px;font-size:7.8px;color:#e6e6e6;font-weight:normal;font-style:normal;font-family:'Liberation Sans', sans-serif;transform:scaleX(0.8833333333333333);transform-origin:left center;">Horse Trainer</div>
<div class="t" style="left:555.9000000000001px;top:221.95px;font-size:7.8px;color:#e6e6e6;font-weight:normal;font-style:normal;font-family:'Liberation Sans', sans-serif;transform:scaleX(0.8142857142857144);transform-origin:left center;">BLAKE, Mr …</div>
<div class="b" style="left:605.0px;top:213.79999999999998px;width:57.80000000000005px;height:15.34px;background:#4d4f50;border:1.2px solid #a8a8a8;"></div>
<div class="t" style="left:612.8px;top:221.95px;font-size:7.8px;color:#e6e6e6;font-weight:normal;font-style:normal;font-family:'Liberation Sans', sans-serif;transform:scaleX(0.8142857142857144);transform-origin:left center;">BLAKE, Mr …</div>
<div class="t" style="right:333.0px;top:221.95px;font-size:7.8px;color:#e8e8e8;font-weight:bold;font-style:normal;font-family:'Liberation Sans', sans-serif;transform:scaleX(0.93);transform-origin:right center;">5</div>
<div class="t" style="right:276.79999999999995px;top:221.95px;font-size:7.8px;color:#e8e8e8;font-weight:normal;font-style:normal;font-family:'Liberation Sans', sans-serif;transform:scaleX(0.93);transform-origin:right center;">5</div>
<div class="t" style="left:761.7px;top:221.95px;font-size:7.8px;color:#e6e6e6;font-weight:normal;font-style:normal;font-family:'Liberation Sans', sans-serif;transform:scaleX(0.875);transform-origin:left center;">Crew</div>
<div class="t" style="left:817.7px;top:221.95px;font-size:7.8px;color:#e6e6e6;font-weight:normal;font-style:normal;font-family:'Liberation Sans', sans-serif;transform:scaleX(0.8888888888888888);transform-origin:left center;">Southampt…</div>
<div class="t" style="left:874.2px;top:221.95px;font-size:7.8px;color:#e6e6e6;font-weight:normal;font-style:normal;font-family:'Liberation Sans', sans-serif;transform:scaleX(0.8857142857142858);transform-origin:left center;">Fireman</div>
<div class="t" style="left:555.9000000000001px;top:238.59px;font-size:7.8px;color:#e6e6e6;font-weight:normal;font-style:normal;font-family:'Liberation Sans', sans-serif;transform:scaleX(0.8);transform-origin:left center;">MINTRAM, …</div>
<div class="b" style="left:605.0px;top:230.44px;width:57.80000000000005px;height:15.34px;background:#4d4f50;border:1.2px solid #a8a8a8;"></div>
<div class="t" style="left:612.8px;top:238.59px;font-size:7.8px;color:#e6e6e6;font-weight:normal;font-style:normal;font-family:'Liberation Sans', sans-serif;transform:scaleX(0.8);transform-origin:left center;">MINTRAM, …</div>
<div class="t" style="right:333.0px;top:238.59px;font-size:7.8px;color:#e8e8e8;font-weight:bold;font-style:normal;font-family:'Liberation Sans', sans-serif;transform:scaleX(0.93);transform-origin:right center;">6</div>
<div class="t" style="right:276.79999999999995px;top:238.59px;font-size:7.8px;color:#e8e8e8;font-weight:normal;font-style:normal;font-family:'Liberation Sans', sans-serif;transform:scaleX(0.93);transform-origin:right center;">6</div>
<div class="t" style="left:761.7px;top:238.59px;font-size:7.8px;color:#e6e6e6;font-weight:normal;font-style:normal;font-family:'Liberation Sans', sans-serif;transform:scaleX(0.875);transform-origin:left center;">Crew</div>
<div class="t" style="left:817.7px;top:238.59px;font-size:7.8px;color:#e6e6e6;font-weight:normal;font-style:normal;font-family:'Liberation Sans', sans-serif;transform:scaleX(0.8888888888888888);transform-origin:left center;">Southampt…</div>
<div class="t" style="left:874.2px;top:238.59px;font-size:7.8px;color:#e6e6e6;font-weight:normal;font-style:normal;font-family:'Liberation Sans', sans-serif;transform:scaleX(0.8857142857142858);transform-origin:left center;">Fireman</div>
<div class="t" style="left:555.9000000000001px;top:255.23000000000002px;font-size:7.8px;color:#e6e6e6;font-weight:normal;font-style:normal;font-family:'Liberation Sans', sans-serif;transform:scaleX(0.8);transform-origin:left center;">SAALFELD, …</div>
<div class="b" style="left:605.0px;top:247.08px;width:57.80000000000005px;height:15.34px;background:#4d4f50;border:1.2px solid #a8a8a8;"></div>
<div class="t" style="left:612.8px;top:255.23000000000002px;font-size:7.8px;color:#e6e6e6;font-weight:normal;font-style:normal;font-family:'Liberation Sans', sans-serif;transform:scaleX(0.8);transform-origin:left center;">SAALFELD, …</div>
<div class="t" style="right:333.0px;top:255.23000000000002px;font-size:7.8px;color:#e8e8e8;font-weight:bold;font-style:normal;font-family:'Liberation Sans', sans-serif;transform:scaleX(0.93);transform-origin:right center;">7</div>
<div class="t" style="right:276.79999999999995px;top:255.23000000000002px;font-size:7.8px;color:#e8e8e8;font-weight:normal;font-style:normal;font-family:'Liberation Sans', sans-serif;transform:scaleX(0.93);transform-origin:right center;">7</div>
<div class="t" style="left:761.7px;top:255.23000000000002px;font-size:7.8px;color:#e6e6e6;font-weight:normal;font-style:normal;font-family:'Liberation Sans', sans-serif;transform:scaleX(0.883);transform-origin:left center;">1st Class Pa…</div>
<div class="t" style="left:817.7px;top:255.23000000000002px;font-size:7.8px;color:#e6e6e6;font-weight:normal;font-style:normal;font-family:'Liberation Sans', sans-serif;transform:scaleX(0.8888888888888888);transform-origin:left center;">Southampt…</div>
<div class="t" style="left:874.2px;top:255.23000000000002px;font-size:7.8px;color:#e6e6e6;font-weight:normal;font-style:normal;font-family:'Liberation Sans', sans-serif;transform:scaleX(0.890909090909091);transform-origin:left center;">Businessman</div>
<div class="t" style="left:555.9000000000001px;top:271.87px;font-size:7.8px;color:#e6e6e6;font-weight:normal;font-style:normal;font-family:'Liberation Sans', sans-serif;transform:scaleX(0.8);transform-origin:left center;">BARRETT, …</div>
<div class="b" style="left:605.0px;top:263.72px;width:57.80000000000005px;height:15.34px;background:#4d4f50;border:1.2px solid #a8a8a8;"></div>
<div class="t" style="left:612.8px;top:271.87px;font-size:7.8px;color:#e6e6e6;font-weight:normal;font-style:normal;font-family:'Liberation Sans', sans-serif;transform:scaleX(0.8);transform-origin:left center;">BARRETT, …</div>
<div class="t" style="right:333.0px;top:271.87px;font-size:7.8px;color:#e8e8e8;font-weight:bold;font-style:normal;font-family:'Liberation Sans', sans-serif;transform:scaleX(0.93);transform-origin:right center;">8</div>
<div class="t" style="right:276.79999999999995px;top:271.87px;font-size:7.8px;color:#e8e8e8;font-weight:normal;font-style:normal;font-family:'Liberation Sans', sans-serif;transform:scaleX(0.93);transform-origin:right center;">8</div>
<div class="t" style="left:761.7px;top:271.87px;font-size:7.8px;color:#e6e6e6;font-weight:normal;font-style:normal;font-family:'Liberation Sans', sans-serif;transform:scaleX(0.875);transform-origin:left center;">Crew</div>
<div class="t" style="left:817.7px;top:271.87px;font-size:7.8px;color:#e6e6e6;font-weight:normal;font-style:normal;font-family:'Liberation Sans', sans-serif;transform:scaleX(0.8888888888888888);transform-origin:left center;">Southampt…</div>
<div class="t" style="left:874.2px;top:271.87px;font-size:7.8px;color:#e6e6e6;font-weight:normal;font-style:normal;font-family:'Liberation Sans', sans-serif;transform:scaleX(0.8800000000000001);transform-origin:left center;">Leading Fir…</div>
<svg style="left:604.5px;top:116px" width="14" height="8" viewBox="0 0 14 8"><path d="M0.6 4L4.5 0.6V2.9H9.5V0.6L13.4 4L9.5 7.4V5.1H4.5V7.4Z" fill="#ffffff" stroke="#111" stroke-width="0.5"/></svg>
<div class="t" style="left:548px;top:299.8px;font-size:7.7px;color:#d4d4d4;font-weight:normal;font-style:normal;font-family:'Liberation Sans', sans-serif;">2,207 rows × 15 columns</div>
<div class="t" style="left:546.6px;top:336.3px;font-size:8.8px;color:#d4d4d4;font-weight:normal;font-style:normal;font-family:'Liberation Sans', sans-serif;">fraction</div>
<div class="t" style="left:584.8px;top:336.9px;font-size:6.5px;color:#d4d4d4;font-weight:normal;font-style:normal;font-family:'Liberation Sans', sans-serif;">0</div>
<div class="t" style="left:667.8px;top:338px;font-size:6.5px;color:#d4d4d4;font-weight:normal;font-style:normal;font-family:'Liberation Sans', sans-serif;">1</div>
<div class="b" style="left:589.5px;top:331.5px;width:76.5px;height:5.5px;border-radius:3px;background:#f0f0f0"></div>
<div class="b" style="left:589.5px;top:331.5px;width:63px;height:5.5px;border-radius:3px;background:#1a73e8"></div>
<div class="b" style="left:646.5px;top:329.5px;width:9.5px;height:9.5px;border-radius:50%;background:#1a73e8"></div>
<svg style="left:533.8px;top:352px" width="10.2" height="9" viewBox="0 0 10.2 9"><rect x="0.5" y="0.5" width="9.2" height="8" fill="#0c2238" stroke="#2f5275"/><path d="M0.5 4h9M5 4v4.5" stroke="#2f5275"/></svg>
<div class="b" style="left:548px;top:347px;width:388.20000000000005px;height:177.79999999999995px;background:#2b2f31;"></div>
<div class="b" style="left:548px;top:347px;width:388.20000000000005px;height:18.600000000000023px;background:#1c1f21;border-top:1px solid #3a3e41;border-left:1px solid #3a3e41;"></div>
<div class="b" style="left:548px;top:365.6px;width:381.9000000000001px;height:1.599999999999966px;background:#2e3336;"></div>
<div class="b" style="left:584.5px;top:349px;width:1px;height:14.600000000000023px;background:#2a2d30;"></div>
<div class="b" style="left:640.5px;top:349px;width:1px;height:14.600000000000023px;background:#2a2d30;"></div>
<div class="b" style="left:697px;top:349px;width:1px;height:14.600000000000023px;background:#2a2d30;"></div>
<div class="b" style="left:754px;top:349px;width:1px;height:14.600000000000023px;background:#2a2d30;"></div>
<div class="b" style="left:811px;top:349px;width:1px;height:14.600000000000023px;background:#2a2d30;"></div>
<div class="b" style="left:867.5px;top:349px;width:1px;height:14.600000000000023px;background:#2a2d30;"></div>
<div class="b" style="left:924px;top:349px;width:1px;height:14.600000000000023px;background:#2a2d30;"></div>
<div class="b" style="left:548px;top:367.2px;width:381.9000000000001px;height:16.67px;background:#2e3336;"></div>
<div class="b" style="left:548px;top:367.0px;width:381.9000000000001px;height:1.4px;background:#3d4447;"></div>
<div class="b" style="left:548px;top:383.87px;width:381.9000000000001px;height:16.67px;background:#262a2d;"></div>
<div class="b" style="left:548px;top:383.67px;width:381.9000000000001px;height:1.4px;background:#3d4447;"></div>
<div class="b" style="left:548px;top:400.53999999999996px;width:381.9000000000001px;height:16.67px;background:#2e3336;"></div>
<div class="b" style="left:548px;top:400.34px;width:381.9000000000001px;height:1.4px;background:#3d4447;"></div>
<div class="b" style="left:548px;top:417.21px;width:381.9000000000001px;height:16.67px;background:#262a2d;"></div>
<div class="b" style="left:548px;top:417.01px;width:381.9000000000001px;height:1.4px;background:#3d4447;"></div>
<div class="b" style="left:548px;top:433.88px;width:381.9000000000001px;height:16.67px;background:#2e3336;"></div>
<div class="b" style="left:548px;top:433.68px;width:381.9000000000001px;height:1.4px;background:#3d4447;"></div>
<div class="b" style="left:548px;top:450.55px;width:381.9000000000001px;height:16.67px;background:#262a2d;"></div>
<div class="b" style="left:548px;top:450.35px;width:381.9000000000001px;height:1.4px;background:#3d4447;"></div>
<div class="b" style="left:548px;top:467.22px;width:381.9000000000001px;height:16.67px;background:#2e3336;"></div>
<div class="b" style="left:548px;top:467.02000000000004px;width:381.9000000000001px;height:1.4px;background:#3d4447;"></div>
<div class="b" style="left:548px;top:483.89px;width:381.9000000000001px;height:16.67px;background:#262a2d;"></div>
<div class="b" style="left:548px;top:483.69px;width:381.9000000000001px;height:1.4px;background:#3d4447;"></div>
<div class="b" style="left:548px;top:500.56px;width:381.9000000000001px;height:16.67px;background:#2e3336;"></div>
<div class="b" style="left:548px;top:500.36px;width:381.9000000000001px;height:1.4px;background:#3d4447;"></div>
<div class="b" style="left:548px;top:517.03px;width:381.9000000000001px;height:1.4px;background:#3d4447;"></div>
<div class="b" style="left:929.9000000000001px;top:367.2px;width:6.2999999999999545px;height:151.59999999999997px;background:#2a2e30;"></div>
<div class="b" style="left:929.9000000000001px;top:368px;width:6.2999999999999545px;height:7px;background:#4a4f52;"></div>
<div class="b" style="left:548px;top:518.8px;width:388.20000000000005px;height:6px;background:#2c3033;"></div>
<div class="b" style="left:548px;top:518.8px;width:176px;height:6px;background:#4b5154;"></div>
<div class="t" style="left:591.7px;top:357.8px;font-size:7.8px;color:#c0c4c6;font-weight:normal;font-style:normal;font-family:'Liberation Sans', sans-serif;transform:scaleX(0.8800000000000001);transform-origin:left center;">Index</div>
<div class="t" style="left:647.7px;top:357.8px;font-size:7.8px;color:#c0c4c6;font-weight:normal;font-style:normal;font-family:'Liberation Sans', sans-serif;transform:scaleX(0.875);transform-origin:left center;">Name</div>
<div class="t" style="left:704.2px;top:357.8px;font-size:7.8px;color:#c0c4c6;font-weight:normal;font-style:normal;font-family:'Liberation Sans', sans-serif;transform:scaleX(0.8800000000000001);transform-origin:left center;">Class</div>
<div class="t" style="left:761.2px;top:357.8px;font-size:7.8px;color:#c0c4c6;font-weight:normal;font-style:normal;font-family:'Liberation Sans', sans-serif;transform:scaleX(0.8833333333333333);transform-origin:left center;">Joined</div>
<div class="t" style="left:818.2px;top:357.8px;font-size:7.8px;color:#c0c4c6;font-weight:normal;font-style:normal;font-family:'Liberation Sans', sans-serif;transform:scaleX(0.8666666666666667);transform-origin:left center;">Job</div>
<div class="t" style="left:874.7px;top:357.8px;font-size:7.8px;color:#c0c4c6;font-weight:normal;font-style:normal;font-family:'Liberation Sans', sans-serif;transform:scaleX(0.8714285714285713);transform-origin:left center;">TicketC…</div>
<div class="t" style="left:931.2px;top:357.8px;font-size:7.8px;color:#c0c4c6;font-weight:normal;font-style:normal;font-family:'Liberation Sans', sans-serif;transform:scaleX(0.8);transform-origin:left center;">A</div>
<div class="t" style="right:447.0px;top:376.7px;font-size:7.8px;color:#e8e8e8;font-weight:bold;font-style:normal;font-family:'Liberation Sans', sans-serif;transform:scaleX(0.93);transform-origin:right center;">1443</div>
<div class="t" style="right:389.79999999999995px;top:376.7px;font-size:7.8px;color:#e8e8e8;font-weight:normal;font-style:normal;font-family:'Liberation Sans', sans-serif;transform:scaleX(0.93);transform-origin:right center;">1443</div>
<div class="t" style="left:647.7px;top:376.7px;font-size:7.8px;color:#e6e6e6;font-weight:normal;font-style:normal;font-family:'Liberation Sans', sans-serif;transform:scaleX(0.8125000000000001);transform-origin:left center;">PRICE, Mr E…</div>
<div class="t" style="left:704.2px;top:376.7px;font-size:7.8px;color:#e6e6e6;font-weight:normal;font-style:normal;font-family:'Liberation Sans', sans-serif;transform:scaleX(0.875);transform-origin:left center;">Crew</div>
<div class="t" style="left:761.2px;top:376.7px;font-size:7.8px;color:#e6e6e6;font-weight:normal;font-style:normal;font-family:'Liberation Sans', sans-serif;transform:scaleX(0.8888888888888888);transform-origin:left center;">Southampt…</div>
<div class="t" style="left:818.2px;top:376.7px;font-size:7.8px;color:#e6e6e6;font-weight:normal;font-style:normal;font-family:'Liberation Sans', sans-serif;transform:scaleX(0.8833333333333333);transform-origin:left center;">Barman</div>
<div class="t" style="right:106.29999999999995px;top:376.7px;font-size:7.8px;color:#e8e8e8;font-weight:normal;font-style:normal;font-family:'Liberation Sans', sans-serif;transform:scaleX(0.93);transform-origin:right center;">0</div>
<div class="t" style="right:447.0px;top:393.37px;font-size:7.8px;color:#e8e8e8;font-weight:bold;font-style:normal;font-family:'Liberation Sans', sans-serif;transform:scaleX(0.93);transform-origin:right center;">1834</div>
<div class="t" style="right:389.79999999999995px;top:393.37px;font-size:7.8px;color:#e8e8e8;font-weight:normal;font-style:normal;font-family:'Liberation Sans', sans-serif;transform:scaleX(0.93);transform-origin:right center;">1834</div>
<div class="t" style="left:647.7px;top:393.37px;font-size:7.8px;color:#e6e6e6;font-weight:normal;font-style:normal;font-family:'Liberation Sans', sans-serif;transform:scaleX(0.8125000000000001);transform-origin:left center;">COLLEY, Mr…</div>
<div class="t" style="left:704.2px;top:393.37px;font-size:7.8px;color:#e6e6e6;font-weight:normal;font-style:normal;font-family:'Liberation Sans', sans-serif;transform:scaleX(0.883);transform-origin:left center;">1st Class Pa…</div>
<div class="t" style="left:761.2px;top:393.37px;font-size:7.8px;color:#e6e6e6;font-weight:normal;font-style:normal;font-family:'Liberation Sans', sans-serif;transform:scaleX(0.8888888888888888);transform-origin:left center;">Southampt…</div>
<div class="t" style="right:106.29999999999995px;top:393.37px;font-size:7.8px;color:#e8e8e8;font-weight:normal;font-style:normal;font-family:'Liberation Sans', sans-serif;transform:scaleX(0.93);transform-origin:right center;">25.5875</div>
<div class="t" style="right:447.0px;top:410.03999999999996px;font-size:7.8px;color:#e8e8e8;font-weight:bold;font-style:normal;font-family:'Liberation Sans', sans-serif;transform:scaleX(0.93);transform-origin:right center;">1076</div>
<div class="t" style="right:389.79999999999995px;top:410.03999999999996px;font-size:7.8px;color:#e8e8e8;font-weight:normal;font-style:normal;font-family:'Liberation Sans', sans-serif;transform:scaleX(0.93);transform-origin:right center;">1076</div>
<div class="t" style="left:647.7px;top:410.03999999999996px;font-size:7.8px;color:#e6e6e6;font-weight:normal;font-style:normal;font-family:'Liberation Sans', sans-serif;transform:scaleX(0.8);transform-origin:left center;">HARPER, M…</div>
<div class="t" style="left:704.2px;top:410.03999999999996px;font-size:7.8px;color:#e6e6e6;font-weight:normal;font-style:normal;font-family:'Liberation Sans', sans-serif;transform:scaleX(0.883);transform-origin:left center;">1st Class Pa…</div>
<div class="t" style="left:761.2px;top:410.03999999999996px;font-size:7.8px;color:#e6e6e6;font-weight:normal;font-style:normal;font-family:'Liberation Sans', sans-serif;transform:scaleX(0.8888888888888888);transform-origin:left center;">Cherbourg</div>
<div class="t" style="left:818.2px;top:410.03999999999996px;font-size:7.8px;color:#e6e6e6;font-weight:normal;font-style:normal;font-family:'Liberation Sans', sans-serif;transform:scaleX(0.8777777777777778);transform-origin:left center;">Of Indepen…</div>
<div class="t" style="right:106.29999999999995px;top:410.03999999999996px;font-size:7.8px;color:#e8e8e8;font-weight:normal;font-style:normal;font-family:'Liberation Sans', sans-serif;transform:scaleX(0.93);transform-origin:right center;">76.72916667</div>
<div class="t" style="right:447.0px;top:426.71px;font-size:7.8px;color:#e8e8e8;font-weight:bold;font-style:normal;font-family:'Liberation Sans', sans-serif;transform:scaleX(0.93);transform-origin:right center;">1885</div>
<div class="t" style="right:389.79999999999995px;top:426.71px;font-size:7.8px;color:#e8e8e8;font-weight:normal;font-style:normal;font-family:'Liberation Sans', sans-serif;transform:scaleX(0.93);transform-origin:right center;">1885</div>
<div class="t" style="left:647.7px;top:426.71px;font-size:7.8px;color:#e6e6e6;font-weight:normal;font-style:normal;font-family:'Liberation Sans', sans-serif;transform:scaleX(0.8);transform-origin:left center;">DASHWOO…</div>
<div class="t" style="left:704.2px;top:426.71px;font-size:7.8px;color:#e6e6e6;font-weight:normal;font-style:normal;font-family:'Liberation Sans', sans-serif;transform:scaleX(0.875);transform-origin:left center;">Crew</div>
<div class="t" style="left:761.2px;top:426.71px;font-size:7.8px;color:#e6e6e6;font-weight:normal;font-style:normal;font-family:'Liberation Sans', sans-serif;transform:scaleX(0.8888888888888888);transform-origin:left center;">Southampt…</div>
<div class="t" style="left:818.2px;top:426.71px;font-size:7.8px;color:#e6e6e6;font-weight:normal;font-style:normal;font-family:'Liberation Sans', sans-serif;transform:scaleX(0.8777777777777778);transform-origin:left center;">Saloon Ste…</div>
<div class="t" style="right:106.29999999999995px;top:426.71px;font-size:7.8px;color:#e8e8e8;font-weight:normal;font-style:normal;font-family:'Liberation Sans', sans-serif;transform:scaleX(0.93);transform-origin:right center;">0</div>
<div class="t" style="right:447.0px;top:443.38px;font-size:7.8px;color:#e8e8e8;font-weight:bold;font-style:normal;font-family:'Liberation Sans', sans-serif;transform:scaleX(0.93);transform-origin:right center;">1126</div>
<div class="t" style="right:389.79999999999995px;top:443.38px;font-size:7.8px;color:#e8e8e8;font-weight:normal;font-style:normal;font-family:'Liberation Sans', sans-serif;transform:scaleX(0.93);transform-origin:right center;">1126</div>
<div class="t" style="left:647.7px;top:443.38px;font-size:7.8px;color:#e6e6e6;font-weight:normal;font-style:normal;font-family:'Liberation Sans', sans-serif;transform:scaleX(0.8);transform-origin:left center;">ABBING, M…</div>
<div class="t" style="left:704.2px;top:443.38px;font-size:7.8px;color:#e6e6e6;font-weight:normal;font-style:normal;font-family:'Liberation Sans', sans-serif;transform:scaleX(0.8811111111111111);transform-origin:left center;">3rd Class P…</div>
<div class="t" style="left:761.2px;top:443.38px;font-size:7.8px;color:#e6e6e6;font-weight:normal;font-style:normal;font-family:'Liberation Sans', sans-serif;transform:scaleX(0.8888888888888888);transform-origin:left center;">Southampt…</div>
<div class="t" style="left:818.2px;top:443.38px;font-size:7.8px;color:#e6e6e6;font-weight:normal;font-style:normal;font-family:'Liberation Sans', sans-serif;transform:scaleX(0.89);transform-origin:left center;">Blacksmith</div>
<div class="t" style="right:106.29999999999995px;top:443.38px;font-size:7.8px;color:#e8e8e8;font-weight:normal;font-style:normal;font-family:'Liberation Sans', sans-serif;transform:scaleX(0.93);transform-origin:right center;">7.55</div>
<div class="t" style="right:447.0px;top:460.05px;font-size:7.8px;color:#e8e8e8;font-weight:bold;font-style:normal;font-family:'Liberation Sans', sans-serif;transform:scaleX(0.93);transform-origin:right center;">1445</div>
<div class="t" style="right:389.79999999999995px;top:460.05px;font-size:7.8px;color:#e8e8e8;font-weight:normal;font-style:normal;font-family:'Liberation Sans', sans-serif;transform:scaleX(0.93);transform-origin:right center;">1445</div>
<div class="t" style="left:647.7px;top:460.05px;font-size:7.8px;color:#e6e6e6;font-weight:normal;font-style:normal;font-family:'Liberation Sans', sans-serif;transform:scaleX(0.8142857142857144);transform-origin:left center;">ÅDAHL, Mr …</div>
<div class="t" style="left:704.2px;top:460.05px;font-size:7.8px;color:#e6e6e6;font-weight:normal;font-style:normal;font-family:'Liberation Sans', sans-serif;transform:scaleX(0.8811111111111111);transform-origin:left center;">3rd Class P…</div>
<div class="t" style="left:761.2px;top:460.05px;font-size:7.8px;color:#e6e6e6;font-weight:normal;font-style:normal;font-family:'Liberation Sans', sans-serif;transform:scaleX(0.8888888888888888);transform-origin:left center;">Southampt…</div>
<div class="t" style="left:818.2px;top:460.05px;font-size:7.8px;color:#e6e6e6;font-weight:normal;font-style:normal;font-family:'Liberation Sans', sans-serif;transform:scaleX(0.8777777777777778);transform-origin:left center;">General La…</div>
<div class="t" style="right:106.29999999999995px;top:460.05px;font-size:7.8px;color:#e8e8e8;font-weight:normal;font-style:normal;font-family:'Liberation Sans', sans-serif;transform:scaleX(0.93);transform-origin:right center;">7.25</div>
<div class="t" style="right:447.0px;top:476.72px;font-size:7.8px;color:#e8e8e8;font-weight:bold;font-style:normal;font-family:'Liberation Sans', sans-serif;transform:scaleX(0.93);transform-origin:right center;">1997</div>
<div class="t" style="right:389.79999999999995px;top:476.72px;font-size:7.8px;color:#e8e8e8;font-weight:normal;font-style:normal;font-family:'Liberation Sans', sans-serif;transform:scaleX(0.93);transform-origin:right center;">1997</div>
<div class="t" style="left:647.7px;top:476.72px;font-size:7.8px;color:#e6e6e6;font-weight:normal;font-style:normal;font-family:'Liberation Sans', sans-serif;transform:scaleX(0.8);transform-origin:left center;">BOOTHBY, …</div>
<div class="t" style="left:704.2px;top:476.72px;font-size:7.8px;color:#e6e6e6;font-weight:normal;font-style:normal;font-family:'Liberation Sans', sans-serif;transform:scaleX(0.875);transform-origin:left center;">Crew</div>
<div class="t" style="left:761.2px;top:476.72px;font-size:7.8px;color:#e6e6e6;font-weight:normal;font-style:normal;font-family:'Liberation Sans', sans-serif;transform:scaleX(0.8888888888888888);transform-origin:left center;">Southampt…</div>
<div class="t" style="left:818.2px;top:476.72px;font-size:7.8px;color:#e6e6e6;font-weight:normal;font-style:normal;font-family:'Liberation Sans', sans-serif;transform:scaleX(0.8811111111111111);transform-origin:left center;">2nd Class B…</div>
<div class="t" style="right:106.29999999999995px;top:476.72px;font-size:7.8px;color:#e8e8e8;font-weight:normal;font-style:normal;font-family:'Liberation Sans', sans-serif;transform:scaleX(0.93);transform-origin:right center;">0</div>
<div class="t" style="right:447.0px;top:493.39px;font-size:7.8px;color:#e8e8e8;font-weight:bold;font-style:normal;font-family:'Liberation Sans', sans-serif;transform:scaleX(0.93);transform-origin:right center;">1225</div>
<div class="t" style="right:389.79999999999995px;top:493.39px;font-size:7.8px;color:#e8e8e8;font-weight:normal;font-style:normal;font-family:'Liberation Sans', sans-serif;transform:scaleX(0.93);transform-origin:right center;">1225</div>
<div class="t" style="left:647.7px;top:493.39px;font-size:7.8px;color:#e6e6e6;font-weight:normal;font-style:normal;font-family:'Liberation Sans', sans-serif;transform:scaleX(0.8);transform-origin:left center;">GOODWIN,…</div>
<div class="t" style="left:704.2px;top:493.39px;font-size:7.8px;color:#e6e6e6;font-weight:normal;font-style:normal;font-family:'Liberation Sans', sans-serif;transform:scaleX(0.8811111111111111);transform-origin:left center;">3rd Class P…</div>
<div class="t" style="left:761.2px;top:493.39px;font-size:7.8px;color:#e6e6e6;font-weight:normal;font-style:normal;font-family:'Liberation Sans', sans-serif;transform:scaleX(0.8888888888888888);transform-origin:left center;">Southampt…</div>
<div class="t" style="right:106.29999999999995px;top:493.39px;font-size:7.8px;color:#e8e8e8;font-weight:normal;font-style:normal;font-family:'Liberation Sans', sans-serif;transform:scaleX(0.93);transform-origin:right center;">46.9</div>
<div class="t" style="right:447.0px;top:510.06px;font-size:7.8px;color:#e8e8e8;font-weight:bold;font-style:normal;font-family:'Liberation Sans', sans-serif;transform:scaleX(0.93);transform-origin:right center;">1034</div>
<div class="t" style="right:389.79999999999995px;top:510.06px;font-size:7.8px;color:#e8e8e8;font-weight:normal;font-style:normal;font-family:'Liberation Sans', sans-serif;transform:scaleX(0.93);transform-origin:right center;">1034</div>
<div class="t" style="left:647.7px;top:510.06px;font-size:7.8px;color:#e6e6e6;font-weight:normal;font-style:normal;font-family:'Liberation Sans', sans-serif;transform:scaleX(0.8);transform-origin:left center;">JERMYN, M…</div>
<div class="t" style="left:704.2px;top:510.06px;font-size:7.8px;color:#e6e6e6;font-weight:normal;font-style:normal;font-family:'Liberation Sans', sans-serif;transform:scaleX(0.8811111111111111);transform-origin:left center;">3rd Class P…</div>
<div class="t" style="left:761.2px;top:510.06px;font-size:7.8px;color:#e6e6e6;font-weight:normal;font-style:normal;font-family:'Liberation Sans', sans-serif;transform:scaleX(0.89);transform-origin:left center;">Queenstown</div>
<div class="t" style="right:106.29999999999995px;top:510.06px;font-size:7.8px;color:#e8e8e8;font-weight:normal;font-style:normal;font-family:'Liberation Sans', sans-serif;transform:scaleX(0.93);transform-origin:right center;">7.75</div>
<div class="t" style="left:548px;top:537.5px;font-size:7.7px;color:#d4d4d4;font-weight:normal;font-style:normal;font-family:'Liberation Sans', sans-serif;">1,876 rows × 15 columns</div>
<div class="b" style="left:80px;top:562.5px;width:864px;height:13.5px;background:#0d86cc;"></div>
<div class="b" style="left:80px;top:562.5px;width:4.7px;height:13.5px;background:#16825d;"></div>
<svg style="left:88px;top:564px" width="9" height="11" viewBox="0 0 9 11"><circle cx="2.5" cy="2" r="1.3" stroke="#fff" fill="none" stroke-width="0.9"/><circle cx="2.5" cy="9" r="1.3" stroke="#fff" fill="none" stroke-width="0.9"/><circle cx="6.5" cy="3" r="1.3" stroke="#fff" fill="none" stroke-width="0.9"/><path d="M2.5 3.3v4.4M6.5 4.3c0 2-4 2-4 3.4" stroke="#fff" fill="none" stroke-width="0.9"/></svg>
<div class="t" style="left:99.5px;top:570px;font-size:7.4px;color:#ffffff;font-weight:normal;font-style:normal;font-family:'Liberation Sans', sans-serif;">no-custom-editor*</div>
<svg style="left:167px;top:565px" width="9" height="9" viewBox="0 0 9 9"><path d="M1.5 4.5a3 3 0 0 1 5.5-1.6M7.5 4.5a3 3 0 0 1-5.5 1.6" stroke="#fff" fill="none" stroke-width="1"/><path d="M7.6 1v2.4H5.2M1.4 8V5.6h2.4" stroke="#fff" fill="none" stroke-width="0.9"/></svg>
<div class="t" style="left:178px;top:570px;font-size:7.2px;color:#ffffff;font-weight:normal;font-style:normal;font-family:'Liberation Sans', sans-serif;">0↓ 1↑</div>
<svg style="left:204px;top:565px" width="9" height="9" viewBox="0 0 9 9"><circle cx="4.5" cy="4.5" r="3.6" stroke="#fff" fill="none" stroke-width="0.9"/><path d="M3 3l3 3M6 3l-3 3" stroke="#fff" stroke-width="0.9"/></svg>
<div class="t" style="left:216px;top:570px;font-size:7.2px;color:#ffffff;font-weight:normal;font-style:normal;font-family:'Liberation Sans', sans-serif;">0</div>
<svg style="left:220.5px;top:564.5px" width="9" height="9" viewBox="0 0 9 9"><path d="M4.5 1L8.3 8H0.7Z" stroke="#fff" fill="none" stroke-width="0.9"/><path d="M4.5 3.5v2.3M4.5 6.5v0.8" stroke="#fff" stroke-width="0.8"/></svg>
<div class="t" style="left:232px;top:570px;font-size:7.2px;color:#ffffff;font-weight:normal;font-style:normal;font-family:'Liberation Sans', sans-serif;">0</div>
<div class="t" style="left:700.5px;top:570px;font-size:7.1px;color:#ffffff;font-weight:normal;font-style:normal;font-family:'Liberation Sans', sans-serif;transform:scaleX(0.95);transform-origin:left center;">Ln 7, Col 20</div>
<div class="t" style="left:746.75px;top:570px;font-size:7.1px;color:#ffffff;font-weight:normal;font-style:normal;font-family:'Liberation Sans', sans-serif;transform:scaleX(0.95);transform-origin:left center;">Spaces: 4</div>
<div class="t" style="left:785.5px;top:570px;font-size:7.1px;color:#ffffff;font-weight:normal;font-style:normal;font-family:'Liberation Sans', sans-serif;transform:scaleX(0.95);transform-origin:left center;">UTF-8</div>
<div class="t" style="left:813.75px;top:570px;font-size:7.1px;color:#ffffff;font-weight:normal;font-style:normal;font-family:'Liberation Sans', sans-serif;transform:scaleX(0.95);transform-origin:left center;">CRLF</div>
<div class="t" style="left:839px;top:570px;font-size:7.1px;color:#ffffff;font-weight:normal;font-style:normal;font-family:'Liberation Sans', sans-serif;transform:scaleX(0.95);transform-origin:left center;">Glinda</div>
<div class="t" style="left:868.75px;top:570px;font-size:7.1px;color:#ffffff;font-weight:normal;font-style:normal;font-family:'Liberation Sans', sans-serif;transform:scaleX(0.95);transform-origin:left center;">Host: localhost</div>
<svg style="left:925px;top:564.5px" width="9" height="10" viewBox="0 0 9 10"><path d="M3 1.5h4.5v3.5H5.5L4 6.5V5H3Z" stroke="#fff" fill="none" stroke-width="0.9"/><circle cx="2.5" cy="5.5" r="1.2" stroke="#fff" fill="none" stroke-width="0.8"/><path d="M0.5 9a2 2 0 0 1 4 0" stroke="#fff" fill="none" stroke-width="0.8"/></svg>
</body></html>
